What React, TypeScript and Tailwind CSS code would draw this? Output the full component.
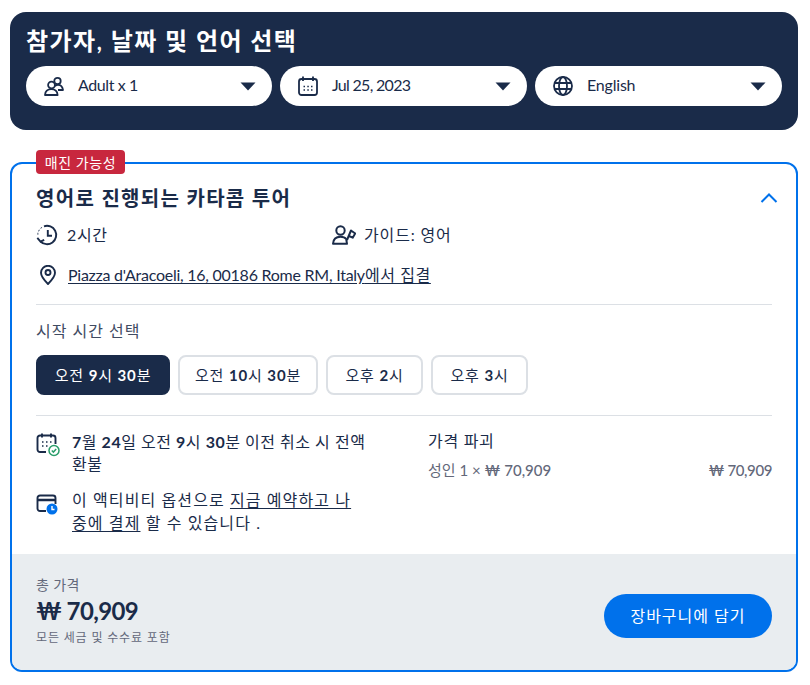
function Caret() {
  return (
    <svg width="16" height="9" viewBox="0 0 16 9" className="shrink-0">
      <path d="M0.5 0.5h15L8 8.5z" fill="#1a2b49" />
    </svg>
  );
}

function Travelers() {
  return (
    <svg width="20" height="20" viewBox="0 0 20 20" fill="none" stroke="#1a2b49" strokeWidth="1.8" strokeLinejoin="round">
      <circle cx="13.5" cy="5" r="3.2" />
      <path d="M11 10c1-1 2-1.200 3-1.200 3 0 4.500 2 5 5.200h-5" />
      <circle cx="7.500" cy="9" r="3.400" fill="white" />
      <path d="M1 19c.3-3.800 2.600-5.800 6.300-5.800s6 2 6.300 5.800z" fill="white" />
    </svg>
  );
}

function Calendar() {
  return (
    <svg width="20" height="20" viewBox="0 0 20 20" fill="none" stroke="#1a2b49" strokeWidth="1.8">
      <rect x="1" y="3" width="18" height="16" rx="2.500" />
      <path d="M5 0.500v4.500M15 0.500v4.500" />
      <path d="M5.500 10.500h1.500M9.300 10.500h1.500M13 10.500h1.500M5.500 14h1.500M9.300 14h1.500M13 14h1.500" strokeWidth="1.500" />
    </svg>
  );
}

function Globe() {
  return (
    <svg width="20" height="20" viewBox="0 0 20 20" fill="none" stroke="#1a2b49" strokeWidth="1.800">
      <circle cx="10" cy="10" r="9" />
      <ellipse cx="10" cy="10" rx="4" ry="9" />
      <path d="M1.500 7h17M1.500 13h17" />
    </svg>
  );
}

function Select({ icon, label, tracking, width }: { icon: React.ReactNode; label: string; tracking: string; width: string }) {
  return (
    <div className={"flex h-10 items-center rounded-[20px] bg-white pl-[18px] pr-[16px] " + width}>
      <span className="flex w-5 shrink-0 justify-center">{icon}</span>
      <span className={"ml-[14px] mt-[-2px] flex-1 text-[16px] leading-6 text-[#1a2b49] " + tracking}>{label}</span>
      <Caret />
    </div>
  );
}

function TimeButton({ label, active, className }: { label: React.ReactNode; active?: boolean; className: string }) {
  return (
    <div
      className={
        "flex h-10 items-center justify-center rounded-lg border-2 text-[15px] tracking-[0.85px] " +
        (active ? "border-[#1a2b49] bg-[#1a2b49] text-white " : "border-[#dce0e5] bg-white text-[#1a2b49] ") +
        className
      }
    >
      <span>{label}</span>
    </div>
  );
}

export default function App() {
  return (
    <div className="h-[685px] w-[810px] overflow-hidden bg-white pt-3 text-[#1a2b49] font-['Lato','Noto_Sans_CJK_KR',sans-serif]">
      <div className="ml-[10px] w-[788px]">
        <section className="h-[118px] rounded-2xl bg-[#1a2b49] px-4 pt-[12px]">
          <h2 className="h-[34px] text-[24px] font-semibold leading-[34px] tracking-[1.4px] text-white">참가자, 날짜 및 언어 선택</h2>
          <div className="mt-2 flex gap-2">
            <Select width="w-[246px]" icon={<Travelers />} label="Adult x 1" tracking="tracking-[-0.4px]" />
            <Select width="w-[247px]" icon={<Calendar />} label="Jul 25, 2023" tracking="tracking-[-0.7px]" />
            <Select width="w-[247px]" icon={<Globe />} label="English" tracking="tracking-[-0.2px]" />
          </div>
        </section>

        <section className="relative mt-8 h-[510px] rounded-xl border-2 border-[#0071eb]">
          <span className="absolute left-6 top-[-14px] flex h-6 w-[89px] items-center justify-center rounded bg-[#c8273e] text-[14px] tracking-[0.6px] text-white">
            매진 가능성
          </span>
          <div className="h-[390px] px-6">
            <div className="flex items-center justify-between pt-[19px]">
              <h3 className="text-[20px] font-semibold leading-[30px] tracking-[1.3px]">영어로 진행되는 카타콤 투어</h3>
              <svg width="18" height="10" viewBox="0 0 18 10" fill="none" stroke="#0071eb" strokeWidth="2" className="mr-[-6px]">
                <path d="M1.500 9L9 1.500 16.500 9" />
              </svg>
            </div>
            <div className="mt-[10px] flex h-6 items-center text-[16px]">
              <div className="flex w-[296px] items-center">
                <svg width="23" height="22" viewBox="0 0 23 22" fill="none" stroke="#1a2b49" strokeWidth="1.900">
                  <path d="M8 2.300A9.200 9.200 0 1 1 4.500 17.500" />
                  <path d="M1.300 13.800l3.200 3.800 3.700-1.800" />
                  <path d="M1.500 9.800h.8M2.600 6.400l.7.400M5 3.600l.5.500" />
                  <path d="M11.800 6v5.800h4.200" />
                </svg>
                <span className="ml-2 tracking-[0.6px]">2시간</span>
              </div>
              <div className="flex items-center">
                <svg width="24" height="20" viewBox="0 0 24 20" fill="none" stroke="#1a2b49" strokeWidth="2" strokeLinejoin="round">
                  <circle cx="8.500" cy="5.500" r="4.200" />
                  <path d="M1 18.800c.3-4.700 3-7 7.500-7 2.500 0 4.500.700 5.700 2.200l.8 4.800z" />
                  <path d="M15 15l4-9.500 4.200 3-2.500 4.200-3.700-1.700" />
                </svg>
                <span className="ml-2 tracking-[0.85px]">가이드: 영어</span>
              </div>
            </div>
            <div className="mt-[16px] flex h-6 items-center text-[16px]">
              <span className="flex w-6 justify-center">
                <svg width="16" height="20" viewBox="0 0 16 20" fill="none" stroke="#1a2b49" strokeWidth="1.900">
                  <path d="M8 19C4 15 1 11.500 1 7.800a7 7 0 0 1 14 0C15 11.500 12 15 8 19z" />
                  <circle cx="8" cy="7.500" r="2.500" />
                </svg>
              </span>
              <a className="ml-2 underline underline-offset-2">
                <span className="tracking-[-0.25px]">Piazza d'Aracoeli, 16, 00186 Rome RM, Italy</span>
                <span className="tracking-[0.6px]">에서 집결</span>
              </a>
            </div>
            <div className="mt-[17px] h-px bg-[#dce0e5]" />
            <p className="mt-[14px] text-[16px] leading-6 tracking-[1px] text-[#3f4b62]">시작 시간 선택</p>
            <div className="mt-[12px] flex gap-2">
              <TimeButton active className="w-[134px]" label={<>오전 <b>9</b>시 <b>30</b>분</>} />
              <TimeButton className="w-[140px]" label={<>오전 <b>10</b>시 <b>30</b>분</>} />
              <TimeButton className="w-[97px]" label={<>오후 <b>2</b>시</>} />
              <TimeButton className="w-[97px]" label={<>오후 <b>3</b>시</>} />
            </div>
            <div className="mt-5 h-px bg-[#dce0e5]" />
            <div className="mt-[13px] flex">
              <div className="w-[392px] pt-[2px]">
                <div className="flex">
                  <svg width="24" height="24" viewBox="0 0 24 24" fill="none" className="mt-[2px] shrink-0">
                    <path d="M10 19H4a2.500 2.500 0 0 1-2.500-2.500V5A2.500 2.500 0 0 1 4 2.500h13A2.500 2.500 0 0 1 19.500 5v6" stroke="#1a2b49" strokeWidth="1.900" />
                    <path d="M6 0.500v4M15 0.500v4" stroke="#1a2b49" strokeWidth="1.900" />
                    <path d="M6 9h1.500M10 9h1.500M14 9h1.500M6 13h1.500M10 13h1.500" stroke="#1a2b49" strokeWidth="1.500" />
                    <circle cx="18" cy="17.500" r="5" stroke="#2a9d6a" strokeWidth="1.500" fill="white" />
                    <path d="M15.800 17.500l1.600 1.600 2.800-3" stroke="#2a9d6a" strokeWidth="1.500" />
                  </svg>
                  <p className="ml-3 w-[300px] text-[16px] leading-[22px] tracking-[0.5px]"><b>7</b>월 <b>24</b>일 오전 <b>9</b>시 <b>30</b>분 이전 취소 시 전액 환불</p>
                </div>
                <div className="mt-[13px] flex">
                  <svg width="24" height="24" viewBox="0 0 24 24" fill="none" className="mt-[5px] shrink-0">
                    <path d="M10 18H4a2.500 2.500 0 0 1-2.500-2.500V5A2.500 2.500 0 0 1 4 2.500h13A2.500 2.500 0 0 1 19.500 5v6" stroke="#1a2b49" strokeWidth="1.900" />
                    <path d="M2 7h17" stroke="#1a2b49" strokeWidth="2.500" />
                    <circle cx="16" cy="16" r="5.500" fill="#0071eb" />
                    <path d="M16 13v3.500h2.500" stroke="white" strokeWidth="1.400" />
                  </svg>
                  <p className="ml-3 w-[288px] text-[16px] leading-[23px] tracking-[1.1px]">
                    이 액티비티 옵션으로 <span className="underline underline-offset-2">지금 예약하고 나중에 결제</span> 할 수 있습니다 .
                  </p>
                </div>
              </div>
              <div className="flex-1">
                <p className="text-[16px] leading-6 tracking-[0.7px]">가격 파괴</p>
                <div className="mt-[7px] flex justify-between text-[15px] leading-5 text-[#63687a]">
                  <span>성인 1 × <b className="font-medium">₩ 70,909</b></span>
                  <b className="font-medium tracking-[-0.4px]">₩ 70,909</b>
                </div>
              </div>
            </div>
          </div>
          <div className="flex h-[116px] items-center justify-between rounded-b-[10px] bg-[#e9edf0] px-6">
            <div className="mt-[-4px]">
              <p className="text-[14px] leading-5 tracking-[0.4px] text-[#63687a]">총 가격</p>
              <p className="mt-px text-[24px] font-bold leading-[30px] tracking-[-0.6px]">₩ 70,909</p>
              <p className="mt-1 text-[12px] leading-4 tracking-[0.85px] text-[#63687a]">모든 세금 및 수수료 포함</p>
            </div>
            <div className="mt-2 flex h-11 w-[168px] items-center justify-center rounded-[22px] bg-[#0071eb] text-[16px] tracking-[1px] text-white">장바구니에 담기</div>
          </div>
        </section>
      </div>
    </div>
  );
}
